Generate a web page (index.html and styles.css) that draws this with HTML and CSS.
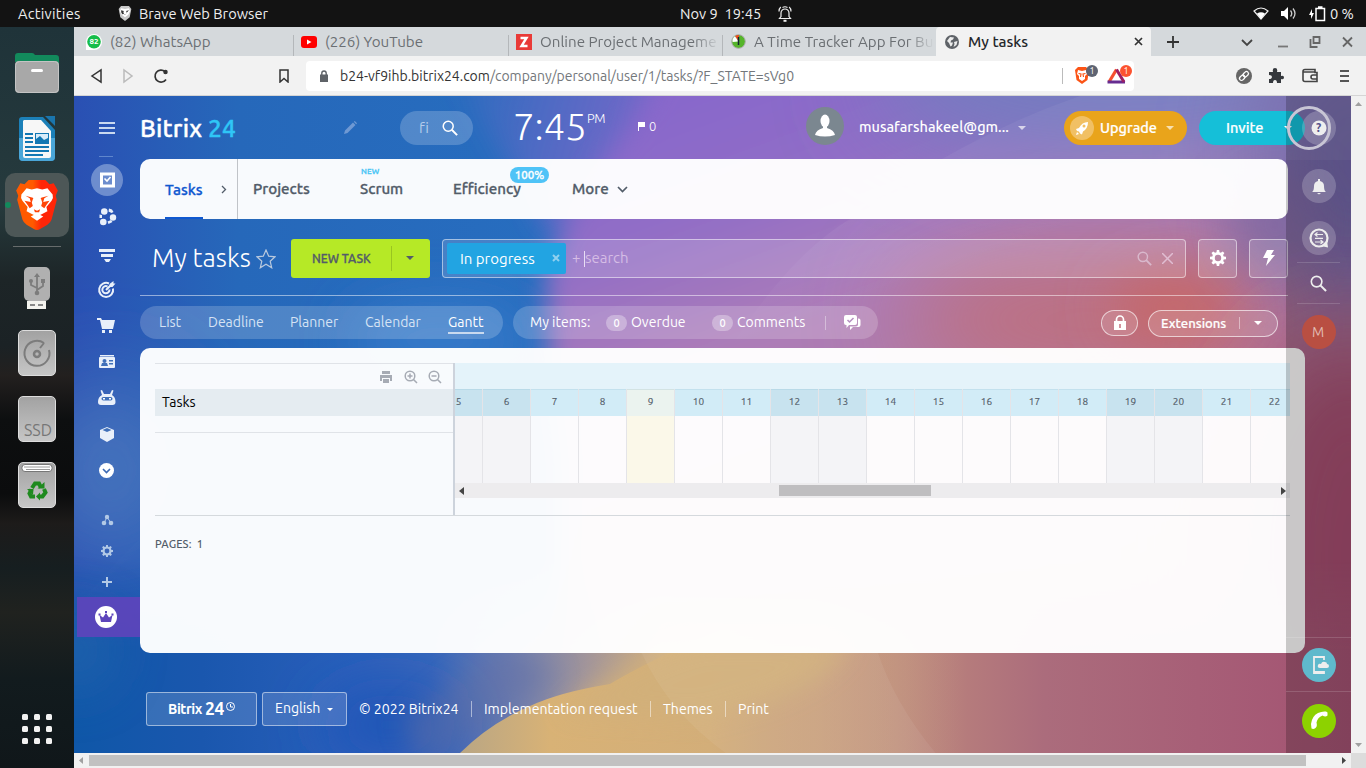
FILE: index.html
```html
<!DOCTYPE html>
<html lang="en">
<head>
<meta charset="utf-8">
<title>My tasks</title>
<link rel="stylesheet" href="styles.css">
</head>
<body>
<svg class="defs" aria-hidden="true">
  <symbol id="gear" viewBox="0 0 16 16"><path fill-rule="evenodd" fill="currentColor" d="M6.8 0h2.4l.3 2.2 1.3.6 1.9-1.4 1.7 1.7-1.3 1.9.6 1.4 2.3.3v2.5l-2.3.4-.5 1.3 1.3 1.9-1.7 1.7-1.9-1.3-1.4.5L9.200 16H6.800l-.4-2.300-1.300-.5-1.900 1.300-1.700-1.700 1.300-1.900-.5-1.300L0 9.200V6.700l2.300-.300.5-1.400-1.300-1.900 1.700-1.700 1.900 1.400 1.400-.6zM8 4.800a3.200 3.200 0 1 0 0 6.400 3.200 3.200 0 0 0 0-6.400z"/></symbol>
  <symbol id="mag" viewBox="0 0 18 18"><circle cx="7" cy="7" r="5.600" fill="none" stroke="currentColor" stroke-width="1.700"/><path d="M11 11l6 6" stroke="currentColor" stroke-width="2.200"/></symbol>
  <symbol id="caret" viewBox="0 0 8 4"><path d="M0 0h8L4 4z" fill="currentColor"/></symbol>
</svg>

<header class="sysbar">
  <span class="s-act">Activities</span>
  <svg class="s-brave" width="14" height="16" viewBox="0 0 40 48"><path fill="#c8c8c8" d="M8 3h24l7 9-5 25-14 11L6 37 1 12z"/><path fill="#fff" d="M8 10l12 2 12-2 3 9-5 10-10 8-10-8L5 19z"/><path fill="#333" d="M8 16l9 2-2 3 2 6 3 2 3-2 2-6-2-3 9-2-7 7-3 5-5-1-5 1-3-5z"/></svg>
  <span class="s-app">Brave Web Browser</span>
  <span class="s-date">Nov 9&nbsp; 19:45</span>
  <svg class="s-bell" width="14" height="16" viewBox="0 0 14 16" fill="none" stroke="#eee" stroke-width="1.200"><path d="M1.500 12.500h11L11 10.500V7a4 4 0 0 0-8 0v3.500zM2.800 1Q1 2.500 1 5.500M11.200 1Q13 2.500 13 5.500M4.500 1.500Q7 0 9.500 1.500"/><path d="M5.500 14.800h3" stroke-width="2"/></svg>
  <svg class="s-wifi" width="16" height="13" viewBox="0 0 16 13"><path d="M1 4Q8-2 15 4L8 12z" fill="none" stroke="#eee" stroke-width="1.200"/><path d="M4 6.500Q8 4 12 6.500L8 12z" fill="#fff"/></svg>
  <svg class="s-vol" width="16" height="13" viewBox="0 0 16 13"><path d="M0 4h3l4-4v13L3 9H0z" fill="#fff"/><path d="M9.500 3.500q2.500 3 0 6M12 1.500q4 5 0 10" fill="none" stroke="#ccc" stroke-width="1.300"/></svg>
  <svg class="s-bat" width="18" height="16" viewBox="0 0 18 16"><path d="M3 3L0 9h2v4l3-6H3z" fill="#fff"/><path d="M7 2.500h8.500v12H7zM9 1h4.500" fill="none" stroke="#fff" stroke-width="1.500"/></svg>
  <span class="s-pct">0 %</span>
</header>

<div class="desktop">
  <nav class="dock">
    <svg class="d-files" width="46" height="42" viewBox="0 0 46 42"><path d="M1 10V4q0-3 3-3h14q2 0 3 2h21q3 0 3 3v6z" fill="#128a5c"/><rect x="1" y="9" width="44" height="32" rx="4" fill="#a8a8a8"/><rect x="1.500" y="9.500" width="43" height="31" rx="4" fill="none" stroke="#c4c4c4"/><rect x="17" y="17" width="12" height="3" rx="1.500" fill="#fff"/></svg>
    <svg class="d-writer" width="38" height="46" viewBox="0 0 38 46"><path d="M4 1h21l12 13v27q0 4-4 4H5q-4 0-4-4V4q0-3 3-3z" fill="#1c80b8"/><path d="M27 0h10v10z" fill="#1a75ad"/><path d="M1 22h36v19q0 4-4 4H5q-4 0-4-4z" fill="#4aa6d8"/><path d="M6 4h17l10 11v25q0 2-2 2H7q-2 0-2-2V5z" fill="#f7f7f7"/><path d="M7 18h8M7 22h8M7 26h8M7 31h24M7 35h24M7 39h18" stroke="#1277b3" stroke-width="2"/><rect x="17.500" y="17.500" width="13" height="10" fill="#d8ecfa" stroke="#1277b3"/><path d="M18 27v-4l4-3 4 4 4-2v5z" fill="#1277b3"/></svg>
    <div class="d-active"><i class="d-dot"></i>
      <svg width="42" height="50" viewBox="0 0 40 48"><defs><linearGradient id="bo"><stop offset=".4" stop-color="#ff5a00"/><stop offset=".6" stop-color="#ff2508"/></linearGradient></defs><path d="M12 0h16l4 4 4-1 4 7-2 5 1 4-5 19q-1 3-4 5l-7 4q-3 2-6 0l-7-4q-3-2-4-5L1 19l1-4-2-5 4-7 4 1z" fill="url(#bo)"/><path d="M10 8l5 1 5-1 5 1 5-1 5 6q1 3-1 6l-5 6 1 4-6 3-4 2-4-2-6-3 1-4-5-6q-2-3-1-6zM14 35l6-3 6 3-6 4z" fill="#fff"/><path d="M9 15l7 2q1 .5 0 1.500l-1 3 1 3.500-3 2-2-3-3-4 6 1-1-3.500zM31 15l-7 2q-1 .5 0 1.500l1 3-1 3.500 3 2 2-3 3-4-6 1 1-3.500zM17 28l3 1.500 3-1.500-1 3h-4z" fill="#ff4508"/></svg>
    </div>
    <i class="d-sep"></i>
    <svg class="d-usb" width="28" height="44" viewBox="0 0 28 44"><rect x="1" y="1" width="26" height="34" rx="5" fill="#b0b0b0"/><path d="M4 35h19v8H4z" fill="#f3f3ee"/><path d="M7 39h5M15 39h5" stroke="#888" stroke-width="2"/><g fill="none" stroke="#7c7c7c" stroke-width="1.800"><path d="M14 9v18M14 22L8 19v-4M14 24l6-4v-5"/></g><path d="M11 11l3-4 3 4zM18 13h4v4h-4z" fill="#7c7c7c"/><circle cx="8" cy="15" r="2" fill="#7c7c7c"/><circle cx="14" cy="27" r="2.300" fill="#7c7c7c"/></svg>
    <div class="d-disk d-hdd"><svg width="30" height="30" viewBox="0 0 30 30" fill="none" stroke="#7c7c7c" stroke-width="2"><path d="M22 5A12.500 12.500 0 1 0 27 12M22 5l-4 5"/><circle cx="15" cy="16" r="3" stroke-width="2.500"/></svg></div>
    <div class="d-disk d-ssd">SSD</div>
    <div class="d-disk d-trash"><svg width="38" height="46" viewBox="0 0 38 46"><rect x="4" y="2.500" width="30" height="7" rx="3" fill="#fff" stroke="#777"/><path d="M6 5h26M8 7.500h24" stroke="#999"/><g fill="none" stroke="#1f8a1f" stroke-width="4"><path d="M14 26l3-4.500h4l2 4M26 27l1.500 3.500-3 4H21M17 34.500h-4l-1.500-3 2-4"/></g><path d="M19.500 26.500h7V20zM22 30.500v8l-4-4zM9 27h6.500L15 33z" fill="#1f8a1f"/></svg></div>
    <div class="d-apps"><i></i><i></i><i></i><i></i><i></i><i></i><i></i><i></i><i></i></div>
  </nav>

  <section class="browser">
    <div class="tabs">
      <div class="tab t1"><svg width="16" height="16" viewBox="0 0 16 16"><path d="M0 16V8a8 8 0 1 1 8 8z" fill="#fff"/><circle cx="8" cy="7.800" r="6.800" fill="#16bd4a"/></svg><b class="n82">82</b><span>(82) WhatsApp</span></div>
      <div class="tab t2"><svg width="16" height="12" viewBox="0 0 16 12"><rect width="16" height="12" rx="3" fill="#f00"/><path d="M6 3.500v5L10.500 6z" fill="#fff"/></svg><span>(226) YouTube</span></div>
      <div class="tab t3"><svg width="16" height="16" viewBox="0 0 16 16"><path fill="#e93a37" d="M0 0h16v16H0z"/><path d="M4.500 4h6l-5 8h6" fill="none" stroke="#fff" stroke-width="2.400"/></svg><span class="fade">Online Project Manageme</span></div>
      <div class="tab t4"><svg width="15" height="15" viewBox="0 0 15 15"><circle cx="7.500" cy="7.500" r="6.800" fill="#55b52a" stroke="#aaa"/><path d="M7.500 7.500L4 2.200A6 6 0 0 1 8 1z" fill="#f04a20"/><path d="M7.500 7.500L4 2.200A6 6 0 0 0 1.500 8z" fill="#fff"/><path d="M7.500 3v8" stroke="#123" stroke-width="1.500"/></svg><span class="fade">A Time Tracker App For Bu</span></div>
      <div class="tab t5"><svg width="14" height="14" viewBox="0 0 14 14"><circle cx="7" cy="7" r="7" fill="#5f6368"/><path d="M2 6l3-4 4 .5-1 2-2 1-.5 2H8l-1 3-1.500 1L4 8zM9 7l3.500-1-1 4-3 2 1-3z" fill="#eee"/></svg><span>My tasks</span><svg class="tx" width="9" height="9" viewBox="0 0 9 9"><path d="M1 1l7 7M8 1L1 8" stroke="#333" stroke-width="1.700"/></svg></div>
      <svg class="plus" width="12" height="12" viewBox="0 0 12 12"><path d="M6 0v12M0 6h12" stroke="#333" stroke-width="1.800"/></svg>
      <svg class="win" width="114" height="12" viewBox="0 0 114 12" fill="none" stroke="#444" stroke-width="1.800"><path d="M1 4l5 5 5-5"/><path d="M37 10.500h10" stroke="#777"/><path d="M72.500 1h6v6h-6zM69.500 3v8h7" stroke="#666"/><path d="M102 1.500l9 9M111 1.500l-9 9" stroke="#666"/></svg>
    </div>
    <div class="toolbar">
      <svg class="nav3" width="80" height="16" viewBox="0 0 80 16" fill="none" stroke="#333" stroke-width="1.500"><path d="M12 2v12L3 8z"/><path d="M35 2v12l8-6z" stroke="#bbb"/><path d="M77 11.500A6 6 0 1 1 76 3.500" stroke-width="1.700"/><circle cx="76.500" cy="4" r="1.500" fill="#333"/></svg>
      <svg class="bm" width="10" height="14" viewBox="0 0 10 14"><path d="M1 1h8v12L5 9.500 1 13z" fill="none" stroke="#333" stroke-width="1.500"/></svg>
      <div class="url">
        <svg class="lk" width="8" height="12" viewBox="0 0 8 12"><path d="M0 4.500h8V12H0z" fill="#5f6368"/><path d="M1.800 5V3.200a2.200 2.200 0 0 1 4.400 0V5" fill="none" stroke="#5f6368" stroke-width="1.400"/></svg>
        <span class="addr"><em>b24-vf9ihb.bitrix24.com</em>/company/personal/user/1/tasks/?F_STATE=sVg0</span>
        <i class="usep"></i>
        <svg class="ext" width="60" height="22" viewBox="0 0 60 22"><path d="M4 3h8l3 3-1.500 10L8 20l-5.500-4L1 6z" fill="#fb5416"/><path d="M4 6l4 1 4-1 1 4-2 2v3l-3 2-3-2v-3l-2-2z" fill="#fff"/><path d="M4.500 9.500L7 10l-.5 3M11.500 9.500L9 10l.5 3" fill="none" stroke="#fb5416" stroke-width="1.200"/><circle cx="18" cy="7" r="6" fill="#5e6472"/><path d="M42.500 5L34 19h17z" fill="#fff"/><path d="M35 18L42.500 5.500" stroke="#f5502f" stroke-width="3.200"/><path d="M33.500 18h17.500" stroke="#662d91" stroke-width="3"/><path d="M42.500 5.500L50 18" stroke="#9e1f63" stroke-width="3"/><circle cx="52" cy="7" r="6" fill="#fc5330"/><g fill="#fff" font-size="9" text-anchor="middle"><text x="18" y="10.200">1</text><text x="52" y="10.200">1</text></g></svg>
      </div>
      <svg class="tools" width="116" height="18" viewBox="0 0 116 18"><circle cx="8" cy="9" r="8" fill="#666"/><g fill="none" stroke="#fff" stroke-width="1.300" transform="rotate(-45 8 9)"><rect x="2.500" y="7" width="6" height="4" rx="2"/><rect x="7.500" y="7" width="6" height="4" rx="2"/></g><path d="M33 5h4q-1-4 2-4t2 4h4v4q3-1 3 1.500T45 12v4h-4q0-3-2-3t-2 3h-4v-4q3 0 3-2t-3-2z" fill="#35383d"/><path d="M67 4.500q0-2 2-2h10v3h2v9H69q-2 0-2-2zM67 5h12M81 8h-4q-2 0-2 2t2 2h4" fill="none" stroke="#444" stroke-width="1.600"/><path d="M104 4h9M104 9h9M104 14h9" stroke="#555" stroke-width="2"/></svg>
    </div>

    <div class="view">
      <main class="page">
        <svg class="bg" width="1277" height="657" viewBox="74 96 1277 657" preserveAspectRatio="none">
          <defs>
            <linearGradient id="base" x1="74" x2="540" y1="0" y2="0" gradientUnits="userSpaceOnUse"><stop offset="0" stop-color="#2a50b3"/><stop offset=".35" stop-color="#2668ba"/><stop offset="1" stop-color="#276dbf"/></linearGradient>
            <linearGradient id="right" x1="700" x2="900" y1="96" y2="640" gradientUnits="userSpaceOnUse"><stop offset="0" stop-color="#8868cb"/><stop offset=".2" stop-color="#926ec6"/><stop offset=".42" stop-color="#ac7cb8"/><stop offset="1" stop-color="#b6788e"/></linearGradient>
            <linearGradient id="top" x1="440" x2="660" y1="90" y2="150" gradientUnits="userSpaceOnUse"><stop offset="0" stop-color="#8467ca" stop-opacity="0"/><stop offset="1" stop-color="#8467ca" stop-opacity=".9"/></linearGradient>
            <linearGradient id="strip" x1="74" x2="1351" y1="0" y2="0" gradientUnits="userSpaceOnUse"><stop offset="0" stop-color="#0f57a8"/><stop offset=".1" stop-color="#1a57ae"/><stop offset=".22" stop-color="#2a5fbb"/><stop offset=".28" stop-color="#3866bb"/><stop offset=".34" stop-color="#6b7cb0"/><stop offset=".4" stop-color="#a0949b"/><stop offset=".46" stop-color="#cfae80"/><stop offset=".58" stop-color="#ceaa7d"/><stop offset=".65" stop-color="#c2937f"/><stop offset=".7" stop-color="#b57b7c"/><stop offset=".76" stop-color="#ab6c7c"/><stop offset="1" stop-color="#a35272"/></linearGradient>
            <linearGradient id="stripfade" x1="0" x2="0" y1="560" y2="650" gradientUnits="userSpaceOnUse"><stop offset="0" stop-color="#000"/><stop offset="1" stop-color="#fff"/></linearGradient>
            <mask id="sm"><path d="M74 560h1277v193H74z" fill="url(#stripfade)"/></mask>
            <filter id="b12" x="-30%" y="-30%" width="160%" height="160%"><feGaussianBlur stdDeviation="13"/></filter>
            <filter id="b24" x="-100%" y="-100%" width="300%" height="300%"><feGaussianBlur stdDeviation="26"/></filter>
            <filter id="b45" x="-100%" y="-100%" width="300%" height="300%"><feGaussianBlur stdDeviation="46"/></filter>
            <linearGradient id="sand" x1="460" x2="960" y1="0" y2="0" gradientUnits="userSpaceOnUse"><stop offset="0" stop-color="#b9a684"/><stop offset=".18" stop-color="#d8b276"/><stop offset=".5" stop-color="#d3ae79"/><stop offset=".7" stop-color="#c79d80" stop-opacity=".6"/><stop offset="1" stop-color="#b98886" stop-opacity="0"/></linearGradient>
            <linearGradient id="arc" x1="0" x2=".5" y1="0" y2=".4"><stop offset="0" stop-color="#fff" stop-opacity=".09"/><stop offset="1" stop-color="#fff" stop-opacity="0"/></linearGradient>
            <linearGradient id="edge" x1="860" x2="905" y1="0" y2="-20" gradientUnits="userSpaceOnUse"><stop offset="0" stop-color="#b89098" stop-opacity="0"/><stop offset="1" stop-color="#b89098" stop-opacity=".5"/></linearGradient>
          </defs>
          <path fill="url(#base)" d="M74 96h1277v657H74z"/>
          <ellipse filter="url(#b24)" cx="440" cy="340" rx="90" ry="40" fill="#3679c9"/>
          <path fill="url(#top)" filter="url(#b12)" d="M440 60H800V230H545L520 180z"/>
          <path filter="url(#b12)" fill="url(#right)" d="M665 60Q640 120 590 180 548 240 546 290 545 350 560 460V800H1450V20z"/>
          <ellipse filter="url(#b45)" cx="1130" cy="75" rx="260" ry="85" fill="#757bc0"/>
          <ellipse filter="url(#b45)" cx="1350" cy="160" rx="100" ry="150" fill="#7166a8"/>
          <ellipse filter="url(#b45)" cx="1090" cy="320" rx="190" ry="65" fill="#bd707f"/>
          <ellipse filter="url(#b24)" cx="1175" cy="308" rx="65" ry="38" fill="#c5686b"/>
          <ellipse filter="url(#b24)" cx="1275" cy="225" rx="45" ry="50" fill="#80679f" opacity=".7"/>
          <ellipse filter="url(#b45)" cx="1350" cy="560" rx="120" ry="230" fill="#a44e70"/>
          <ellipse filter="url(#b45)" cx="110" cy="470" rx="70" ry="90" fill="#4a76bd"/>
          <path mask="url(#sm)" fill="url(#strip)" d="M74 560h1277v193H74z"/>
          <ellipse filter="url(#b24)" cx="75" cy="650" rx="40" ry="40" fill="#2c67ae" opacity=".6"/>
          <ellipse filter="url(#b24)" cx="390" cy="725" rx="70" ry="40" fill="#2356b8"/>
          <path filter="url(#b12)" fill="#626fa6" opacity=".5" d="M425 770L560 672 500 650 400 720z"/>
          <path fill="url(#sand)" d="M460 753Q490 723 530 706 560 692 610 684 650 660 720 630H960V753z"/>
          <path filter="url(#b12)" fill="#d2b07a" d="M560 712Q620 665 700 640H850Q830 690 700 720z" opacity=".9"/>
          <path fill="url(#arc)" d="M74 612Q115 560 150 530 200 490 260 470V612z"/>
          <path fill="#fff" opacity=".05" d="M940 160Q1010 120 1080 96H1351V160z"/>
          <path fill="url(#arc)" d="M730 348Q790 255 850 219L900 190H1288V348z"/>
          <path fill="#fff" opacity=".06" d="M640 650Q670 715 730 756H938Q895 705 877 650z"/>
          <path fill="url(#edge)" d="M877 650Q895 705 938 756H870L840 650z"/>
        </svg>

        <aside class="menu">
          <svg width="66" height="560" viewBox="74 96 66 560">
            <g fill="none" stroke="#c9d9f0" stroke-width="2"><path d="M99 123h16M99 128h16M99 133h16"/><path d="M99 156.500h14" stroke="#5f86cd" stroke-width="1"/></g>
            <circle cx="107" cy="180" r="16" fill="#6d8dce"/>
            <path d="M101.500 174h12v12h-12z" fill="none" stroke="#fff" stroke-width="3"/><path d="M103 176h9v4.500q-2 .5-2 3h-5q0-2.500-2-3z" fill="#6d8dce"/><path d="M104.500 178.500l2.500 2.500 3.500-4" fill="none" stroke="#fff" stroke-width="1.600"/>
            <g fill="#e9f0fa"><circle cx="104.300" cy="211.500" r="3.300"/><circle cx="103.300" cy="222" r="3.300"/><circle cx="113" cy="217.500" r="3.200"/><path d="M109 208.500l3 1 1.500 2.500-2 1-3-1.500zM99.500 214.500l2.500.5v3h-2.500zM107.500 221.500l3.500-1.500 1.500 2-4 2z"/>
            <path d="M99 249h16v3H99zM101 254h12v3h-12zM104 259h7l-2 3h-3z"/></g>
            <g fill="none" stroke="#e9f0fa" stroke-width="2"><path d="M109 283.500a7 7 0 1 0 4 5"/><path d="M107.500 286.500a3.600 3.600 0 1 0 2 3M106 290l6-6"/></g><path d="M109.500 284l4-3v2.500h2l-3 3.500h-2.500z" fill="#e9f0fa"/>
            <g fill="#e9f0fa"><path d="M97 318h4l1 2h13l-2 9h-11l-2-9h-3zM102 330h3v3h-3zM109 330h3v3h-3z"/>
            <path d="M100 355h14v1.500h-14z"/><rect x="99" y="357" width="16" height="11" rx="1"/>
            <path d="M98 402q0-5 4-7l-1.500-4.500 1.500-.5 2 4h6l2-4 1.500.5L112 395q3.500 2 3.500 7 0 3-3 3h-11.500q-3 0-3-3z"/><path d="M100 430l7-3 7 3v8l-7 4-7-4z"/></g><path d="M102.500 430l4.500-2 4.500 2-4.500 2z" fill="#4070b9"/>
            <path d="M101 366l1-3h5l1 3zM109 360h4v1.500h-4zM109 363h4v1.500h-4z" fill="#4070b9"/><circle cx="104.500" cy="361" r="2" fill="#4070b9"/><rect x="101.500" y="397" width="11" height="3.600" rx="1.800" fill="#4070b9"/><path d="M103 398.700h2M109 398.700h2" stroke="#fff" stroke-width="1.500"/>
            <circle cx="106.500" cy="470.500" r="7.500" fill="#fff"/><path d="M103 469l3.500 3.500 3.500-3.500" fill="none" stroke="#3c69b3" stroke-width="1.600"/>
            <g fill="#b2c9e6"><circle cx="107" cy="517" r="2.200"/><circle cx="104" cy="523" r="2.300"/><circle cx="111" cy="523" r="2.300"/></g><path d="M104 523l3-6 4 6" fill="none" stroke="#b2c9e6"/>
            <svg x="101" y="545" width="12" height="12" color="#b2c9e6"><use href="#gear"/></svg><path d="M107 577v10M102 582h10" stroke="#b2c9e6" stroke-width="2"/>
            <path d="M77 597h63v40H77z" fill="#5d45bb" opacity=".93"/><circle cx="106" cy="617" r="11" fill="#fff"/><path d="M101 622l-1.500-7 3.500 2.500 3-4.500 3 4.500 3.500-2.500-1.500 7zM98.500 613.500h2v2h-2zM105 611h2v2h-2zM111.500 613.500h2v2h-2z" fill="#5d45bb"/>
          </svg>
        </aside>

        <div class="content">
          <div class="head">
            <span class="logo">Bitrix <b>24</b></span>
            <svg class="pencil" width="13" height="13" viewBox="0 0 13 13"><path d="M0 13l1-3.500L9 1.500l2.500 2.500-8 8zM9.800.8l1-.8L13 2.200l-.8 1z" fill="#6f99d3"/></svg>
            <div class="find"><span>fi</span><svg width="16" height="16"><use href="#mag"/></svg></div>
            <span class="clock">7:45</span><span class="pm">PM</span>
            <svg class="flag" width="7" height="9" viewBox="0 0 7 9"><path d="M0 0h7v5H1v4H0z" fill="#fff"/></svg><span class="cnt">0</span>
            <svg class="ava" width="38" height="38" viewBox="0 0 38 38"><circle cx="19" cy="19" r="19" fill="#7b8790"/><ellipse cx="19" cy="14" rx="4.500" ry="6.500" fill="#fff"/><path d="M17 18h4v3q7 2 8 7-10 3-20 0 1-5 8-7z" fill="#fff"/></svg>
            <span class="mail">musafarshakeel@gm...</span><svg class="c1" width="8" height="4"><use href="#caret"/></svg>
            <div class="btn up"><svg width="24" height="24" viewBox="0 0 24 24"><circle cx="12" cy="12" r="12" fill="#f1c064"/><path d="M18 6q-6 0-9 6l-3 1 1 2 2 .5 1 2 2 1 1-3q5-3 5-9.500zM7 16l-1 3 3-1z" fill="#fff"/><circle cx="14" cy="10" r="1.500" fill="#f1c064"/></svg><span>Upgrade</span><svg width="8" height="4"><use href="#caret"/></svg></div>
            <div class="btn inv"><span>Invite</span><svg width="8" height="4"><use href="#caret"/></svg></div>
          </div>
          <nav class="nav">
            <span class="n-tasks">Tasks</span><svg class="n-ar" width="6" height="9" viewBox="0 0 6 9"><path d="M1 1l3.500 3.500L1 8" fill="none" stroke="#525c69" stroke-width="1.300"/></svg><i class="n-div"></i>
            <span class="n-proj">Projects</span><span class="n-scrum">Scrum<sup>NEW</sup></span><span class="n-eff">Efficiency<b>100%</b></span><span class="n-more">More</span>
            <svg width="11" height="7" viewBox="0 0 11 7"><path d="M1 1l4.500 4.500L10 1" fill="none" stroke="#525c69" stroke-width="1.700"/></svg>
          </nav>
          <div class="titlebar">
            <h1>My tasks</h1>
            <svg class="star" width="20" height="20" viewBox="0 0 20 20"><path d="M10 1l2.700 6.200 6.300.6-4.800 4.400 1.500 6.600L10 15.200l-5.700 3.600 1.500-6.600L1 7.800l6.300-.6z" fill="none" stroke="#b9c9de" stroke-width="1.200"/></svg>
            <div class="newtask"><span>NEW TASK</span><svg width="8" height="4"><use href="#caret"/></svg></div>
            <div class="filter"><div class="chip"><span>In progress</span><svg width="8" height="8" viewBox="0 0 8 8"><path d="M1 1l6 6M7 1L1 7" stroke="#8fd0ef" stroke-width="2"/></svg></div><span class="ph">+ <i></i>search</span><svg class="fm" width="15" height="15"><use href="#mag"/></svg><svg width="11" height="11" viewBox="0 0 11 11"><path d="M0 0l11 11M11 0L0 11" stroke="#e0bdd2" stroke-width="1.500"/></svg></div>
            <div class="sq"><svg width="16" height="16"><use href="#gear"/></svg></div>
            <div class="sq sq2"><svg width="12" height="16" viewBox="0 0 12 16"><path d="M4 0h7L8 5h4L3 16l2-8H0z" fill="#fff"/></svg></div>
          </div>
          <div class="views">
            <div class="pill p1"><span class="v1">List</span><span class="v2">Deadline</span><span class="v3">Planner</span><span class="v4">Calendar</span><span class="v5">Gantt</span></div>
            <div class="pill p2"><span class="w1">My items:</span><b>0</b><span class="w2">Overdue</span><b>0</b><span class="w3">Comments</span><i></i><svg width="17" height="16" viewBox="0 0 17 16"><path d="M2 0h9q2 0 2 2v6q0 2-2 2H5l-2.500 3v-3H2Q0 10 0 8V2q0-2 2-2z" fill="#fff"/><path d="M14 3.500q2.500-.5 2.500 2v4.500q0 2-2 2H9l-3 3v-3.500h6q2 0 2-2z" fill="#fff"/><path d="M3.500 5l2 2 4-4" fill="none" stroke="#b58ec0" stroke-width="1.500"/></svg></div>
            <div class="lock"><svg width="12" height="15" viewBox="0 0 12 15"><path fill="#fff" d="M0 6h12v9H0z"/><path d="M2.500 7V4.500a3.500 3.500 0 0 1 7 0V7" fill="none" stroke="#fff" stroke-width="1.700"/><path d="M6 9v4" stroke="#c4707c" stroke-width="1.500"/></svg></div>
            <div class="exts"><span>Extensions</span><i></i><svg width="8" height="4"><use href="#caret"/></svg></div>
          </div>

          <div class="panel">
            <div class="gantt">
              <div class="g-left">
                <div class="g-tools"><svg width="62" height="14" viewBox="0 0 62 14"><path d="M2 1h8v3H2zM0 5h12v6h-2V8H2v3H0zM3 9h6v4H3z" fill="#a6abb4"/><g fill="none" stroke="#a6abb4" stroke-width="1.500"><circle cx="30" cy="6" r="4.800"/><circle cx="54" cy="6" r="4.800"/><path d="M33.500 9.500l3.500 3.500M57.500 9.500l3.500 3.500M27.500 6h5M30 3.500v5M51.500 6h5"/></g></svg></div>
                <div class="g-title">Tasks</div><div class="g-row"></div>
              </div>
              <div class="g-right">
                <div class="g-month"></div>
                <div class="days"><div class="we">5</div><div class="we">6</div><div>7</div><div>8</div><div class="now">9</div><div>10</div><div>11</div><div class="we">12</div><div class="we">13</div><div>14</div><div>15</div><div>16</div><div>17</div><div>18</div><div class="we">19</div><div class="we">20</div><div>21</div><div>22</div></div>
                <div class="g-scroll"><svg width="5" height="8" viewBox="0 0 5 8"><path d="M5 0v8L0 4z" fill="#444"/></svg><i></i><svg width="5" height="8" viewBox="0 0 5 8"><path d="M0 0v8l5-4z" fill="#444"/></svg></div>
              </div>
            </div>
            <div class="pages">PAGES:&nbsp; 1</div>
          </div>

          <footer class="foot">
            <div class="fb f1"><b>Bitrix</b><b class="f24">24</b><svg width="9" height="9" viewBox="0 0 9 9" fill="none" stroke="#fff"><circle cx="4.500" cy="4.500" r="4"/><path d="M4.500 2v3H7"/></svg></div>
            <div class="fb f2"><span>English</span><svg width="6" height="3"><use href="#caret"/></svg></div>
            <span class="ft a">© 2022 Bitrix24</span><i></i><span class="ft b">Implementation request</span><i></i><span class="ft c">Themes</span><i></i><span class="ft d">Print</span>
          </footer>
        </div>

        <aside class="rail">
          <svg width="65" height="657" viewBox="1286 96 65 657">
            <g fill="#fff" fill-opacity=".2"><circle cx="1319" cy="128" r="17"/><circle cx="1319" cy="186" r="17"/><circle cx="1319" cy="238" r="17"/></g>
            <circle cx="1309" cy="128" r="20.500" fill="none" stroke="#c8c5d5" stroke-width="3"/><circle cx="1319" cy="128" r="7.500" fill="#eee"/>
            <path d="M1312 192q2-1 2-6 0-4 4-5v-2h2v2q4 1 4 5 0 5 2 6zM1317 193h4l-2 1.500z" fill="#eee"/>
            <circle cx="1319" cy="238" r="8.500" fill="none" stroke="#eee" stroke-width="2.200"/><path d="M1321 246l7 1.500-1-7z" fill="#eee"/><path d="M1315 234.500h8M1315 238.300h8M1315 242h8M1317.500 232.500l-2.500 2 2.500 2M1320.500 240l2.500 2-2.500 2" fill="none" stroke="#eee" stroke-width="1.200"/>
            <path d="M1297 262.500h43M1297 303.500h43M1286 637.500h65M1286 691.500h65" stroke="#fff" stroke-opacity=".15"/>
            <svg x="1310" y="275" width="17" height="17" color="#eee"><use href="#mag"/></svg>
            <circle cx="1319" cy="332" r="17" fill="#b94f42"/><circle cx="1319" cy="665" r="17" fill="#5fb9cc"/><circle cx="1319" cy="721" r="17" fill="#8dd200"/>
            <path d="M1324 660v-3h-10v16h10v-2" fill="none" stroke="#eee" stroke-width="1.800"/><path d="M1314 671h10v2h-10z" fill="#eee"/><path d="M1320 668q-3 0-2-3 1-2 3-1 1-3 4-2 2 0 2 2 2 0 2 2t-2 2z" fill="#eee"/>
            <path d="M1311 724q1-8 7-11 4-2 8-1.500l1.500 1v3q-2 2-5 0-5 2-6 7 1 4-1 5.500-2 1.500-4 .5z" fill="#fff"/>
          </svg>
          <span class="q">?</span><span class="m">M</span>
        </aside>
      </main>
      <div class="vs"><svg width="7" height="4" viewBox="0 0 7 4"><path d="M0 4h7L3.500 0z" fill="#a0a0a0"/></svg><svg width="7" height="4" viewBox="0 0 7 4"><path d="M0 0h7L3.500 4z" fill="#a0a0a0"/></svg></div>
    </div>
    <div class="hs"><svg width="4" height="7" viewBox="0 0 4 7"><path d="M4 0v7L0 3.500z" fill="#a0a0a0"/></svg><i></i><svg width="4" height="7" viewBox="0 0 4 7"><path d="M0 0v7l4-3.500z" fill="#444"/></svg><b></b></div>
  </section>
</div>
</body>
</html>
```

FILE: styles.css
```css
* { box-sizing: border-box; }
body { margin: 0; width: 1366px; height: 768px; overflow: hidden; font-family: Ubuntu, "Noto Sans", sans-serif; font-size: 14px; color: #fff; white-space: nowrap; }
svg { display: block; flex: none; }
.defs { position: absolute; width: 0; height: 0; }
i, em { font-style: normal; }

/* system bar */
.sysbar { height: 27px; background: #131313; display: flex; align-items: center; color: #eee; font-size: 14.670px; line-height: 28px; }
.sysbar > * { flex: none; }
.s-act { margin-left: 18px; width: 100px; letter-spacing: .25px; }
.s-brave { margin-top: -2px; }
.s-app { margin-left: 7px; width: 541px; }
.s-date { width: 98px; line-height: 26px; }
.s-wifi { margin-left: 461px; }
.s-vol { margin-left: 12px; }
.s-bat { margin-left: 12px; }
.s-pct { margin-left: 3px; }

.desktop { display: flex; height: 741px; }
.dock { width: 74px; flex: none; display: flex; flex-direction: column; align-items: center; background: linear-gradient(#1f3339 0, #263a3d 24%, #1d2527 34%, #1b2225 43%, #23201f 47%, #0d0f10 53%, #0b0c0d 63%, #1d1b1a 67%, #161e20 73%, #20221f 79%, #121b1e 88%, #10171a 100%); }
.d-files { margin-top: 25px; }
.d-writer { margin-top: 22px; }
.d-active { margin-top: 11px; width: 64px; height: 64px; border-radius: 10px; background: #4d5757; display: flex; align-items: center; justify-content: center; position: relative; }
.d-dot { position: absolute; left: 0; top: 29px; width: 6px; height: 6px; border-radius: 3px; background: #128a5c; }
.d-sep { width: 48px; height: 1px; background: #676c6c; margin-top: 9px; }
.d-usb { margin-top: 19px; }
.d-disk { width: 38px; height: 46px; margin-top: 20px; margin-right: 1px; border-radius: 5px; border: 1px solid #ddd; background: linear-gradient(#a2a2a2, #c6c6c6); display: flex; align-items: center; justify-content: center; flex: none; color: #767676; }
.d-hdd { margin-top: 20px; }
.d-ssd { font-size: 16px; align-items: flex-end; line-height: 21px; padding-left: 3px; }
.d-apps { margin-top: 206px; display: grid; grid-template-columns: repeat(3, 6px); gap: 6px; }
.d-apps i { height: 6px; border-radius: 1.500px; background: #f2f2f2; }

/* browser chrome */
.browser { width: 1292px; flex: none; }
.tabs { height: 29px; background: #d5d9dc; display: flex; align-items: center; color: #6b6f73; font-size: 15.150px; }
.tab { display: flex; align-items: center; height: 29px; flex: none; position: relative; }
.tab::after { content: ""; position: absolute; right: 0; top: 8px; height: 21px; width: 1px; background: #b4b7ba; }
.t1 { width: 220px; padding-left: 12px; }
.t1 span { margin-left: 8px; }
.n82 { position: absolute; left: 12px; width: 16px; text-align: center; font-size: 8px; color: #fff; }
.t2 { width: 215px; padding-left: 7px; }
.t2 span { margin-left: 8px; }
.t3 { width: 214px; padding-left: 7px; }
.t3 span { margin-left: 8px; width: 182px; }
.t4 { width: 213px; padding-left: 8px; }
.t4 span { margin-left: 8px; width: 182px; }
.t4::after, .t5::after { display: none; }
.fade { overflow: hidden; -webkit-mask: linear-gradient(90deg, #000 84%, transparent 99%); mask: linear-gradient(90deg, #000 84%, transparent 99%); }
.t5 { width: 215px; background: #f2f2f2; border-radius: 4px 4px 0 0; padding-left: 9px; color: #24272a; font-weight: 500; }
.t5 span { margin-left: 9px; }
.tx { position: absolute; left: 198px; }
.plus { margin-left: 16px; }
.win { margin-left: 62px; }
.toolbar { height: 40px; background: #f2f2f2; border-bottom: 1px solid #d5d5d5; display: flex; align-items: center; }
.nav3 { margin-left: 15px; }
.bm { margin-left: 110px; }
.url { margin-left: 17px; width: 828px; height: 30px; background: #fff; border-radius: 4px; display: flex; align-items: center; color: #73777b; flex: none; }
.lk { margin-left: 14px; }
.addr { margin-left: 12px; width: 722px; font-size: 14px; }
.addr em { color: #333; }
.usep { width: 1px; height: 16px; background: #bbb; margin-right: 11px; }
.ext { margin-top: -2px; }
.tools { margin-left: 102px; }

/* viewport */
.view { display: flex; height: 657px; }
.page { width: 1277px; height: 657px; position: relative; display: flex; overflow: hidden; }
.bg { position: absolute; left: 0; top: 0; }
.menu { width: 66px; flex: none; position: relative; }
.content { position: relative; width: 1165px; flex: none; }
.vs { width: 15px; background: #f1f1f1; display: flex; flex-direction: column; align-items: center; justify-content: space-between; padding: 6px 0 6px; }
.hs { height: 15px; background: #f1f1f1; display: flex; align-items: center; }
.hs svg:first-child { margin-left: 5px; }
.hs i { margin-left: 6px; width: 1217px; height: 11px; background: #c1c1c1; }
.hs b { margin-left: 5px; width: 15px; height: 15px; background: #dcdcdc; }
.hs i + svg { margin-left: 36px; }

.head { height: 63px; display: flex; align-items: center; }
.head > * { flex: none; }
.logo { width: 204px; font-size: 24.500px; letter-spacing: .2px; font-weight: 500; -webkit-text-stroke: .4px; }
.logo b { color: #2fc6f6; font-weight: 500; }
.find { margin-left: 43px; width: 73px; height: 34px; border-radius: 17px; background: #ffffff33; display: flex; align-items: center; padding-left: 19px; }
.find span { width: 23px; color: #b5cdea; font-size: 15px; font-variant-ligatures: none; }
.clock { margin-left: 40px; width: 74px; font-size: 38.500px; font-weight: 300; letter-spacing: -.2px; line-height: 59px; height: 63px; }
.pm { width: 51px; font-size: 13px; font-weight: 300; margin-top: -19px; letter-spacing: -.5px; }
.flag { margin-top: -3px; }
.cnt { margin-left: 4px; width: 157px; font-size: 13px; font-weight: 300; margin-top: -4px; }
.ava { margin-top: -4px; }
.mail { margin-left: 15px; width: 159px; font-size: 14.500px; font-weight: 500; margin-top: -2px; }
.c1 { color: #d8d4ea; }
.btn { height: 34px; border-radius: 17px; display: flex; align-items: center; font-size: 14.500px; font-weight: 500; -webkit-text-stroke: .2px; }
.up { margin-left: 38px; width: 123px; background: #e9a41b; padding-left: 6px; }
.up span { width: 66px; margin-left: 6px; }
.up svg:last-child { color: #f8e0b0; }
.inv { margin-left: 12px; width: 106px; background: #15bfd8; padding-left: 27px; }
.inv span { width: 58px; }

.nav { width: 1148px; height: 60px; border-radius: 10px; background: #fffffff7; color: #525c69; display: flex; align-items: center; font-weight: 500; font-size: 15.150px; padding-left: 25px; -webkit-text-stroke: .3px; }
.nav > * { flex: none; }
.n-tasks { width: 38px; height: 60px; line-height: 61px; color: #1058d0; border-bottom: 2px solid #1058d0; }
.n-ar { margin-left: 18px; }
.n-div { margin-left: 10px; width: 1px; height: 60px; background: #c0c3c8; }
.n-proj, .n-scrum, .n-eff, .n-more { line-height: 18px; }
.n-proj { margin-left: 15px; width: 107px; }
.n-scrum { width: 93px; position: relative; }
.n-scrum sup { position: absolute; left: 1px; top: -14px; font-size: 8px; line-height: 12px; color: #47c5f5; letter-spacing: .2px; }
.n-eff { width: 119px; position: relative; }
.n-eff b { position: absolute; left: 57px; top: -13px; width: 39px; height: 16px; border-radius: 8px; background: #4fc3f7; color: #fff; font-size: 11.500px; line-height: 16px; text-align: center; font-weight: 500; }
.n-more { width: 45px; }

.titlebar { width: 1148px; height: 77px; border-bottom: 1px solid #ffffff80; display: flex; align-items: center; padding-top: 2px; }
.titlebar > * { flex: none; }
h1 { margin: 0 0 0 12px; width: 104px; font-size: 26px; line-height: 36px; font-weight: 300; }
.star { margin-top: 2px; }
.newtask { margin-left: 15px; width: 139px; height: 39px; border-radius: 3px; background: #b6e926; color: #535c69; display: flex; align-items: center; padding-left: 21px; font-size: 12.100px; font-weight: 500; -webkit-text-stroke: .3px; }
.newtask span { width: 80px; height: 25px; line-height: 25px; border-right: 1px solid #99c520; margin-right: 14px; }
.filter { margin-left: 12px; width: 744px; height: 39px; border: 1px solid #ffffff80; border-radius: 4px; background: #ffffff26; display: flex; align-items: center; padding-left: 4px; }
.chip { width: 119px; height: 31px; background: #22a4e2; border-radius: 2px; display: flex; align-items: center; padding-left: 13px; font-size: 15px; }
.chip span { width: 92px; }
.ph { margin-left: 6px; width: 565px; color: #d5bce5; font-size: 15px; }
.ph i { display: inline-block; width: 1px; height: 16px; background: #e9ddf4; vertical-align: middle; }
.fm { color: #d9b8cc; margin-right: 10px; }
.sq { margin-left: 12px; width: 39px; height: 39px; border: 1px solid #ffffff80; border-radius: 4px; background: #ffffff26; display: flex; align-items: center; justify-content: center; }

.views { height: 52px; display: flex; align-items: center; }
.views > *, .pill > * { flex: none; }
.pill { height: 33px; border-radius: 17px; background: #ffffff30; display: flex; align-items: center; font-size: 14px; margin-top: 1px; line-height: 20px; }
.pill span { margin-top: -1px; }
.p1 { width: 363px; padding-left: 19px; color: #d6e3f4; }
.v1 { width: 49px; } .v2 { width: 82px; } .v3 { width: 75px; } .v4 { width: 83px; }
.pill .v5 { color: #fff; border-bottom: 2px solid #c9daef; width: 36px; line-height: 20px; margin-top: 1px; }
.p2 { margin-left: 10px; width: 365px; padding-left: 17px; }
.w1 { width: 76px; }
.pill b { width: 21px; height: 16px; line-height: 16px; border-radius: 8px; background: #ffffff50; font-size: 11px; font-weight: 500; text-align: center; }
.w2 { margin-left: 4px; width: 81px; } .w3 { margin-left: 4px; width: 88px; }
.pill i { width: 1px; height: 14px; background: #ffffff60; margin-right: 18px; }
.lock { margin-left: 223px; width: 37px; height: 26px; border: 1px solid #ffffffa0; border-radius: 13px; background: #ffffff25; display: flex; align-items: center; justify-content: center; margin-top: 1px; }
.exts { margin-left: 10px; width: 130px; height: 27px; border: 1px solid #ffffffa0; border-radius: 14px; background: #ffffff25; display: flex; align-items: center; padding-left: 12px; font-size: 13.100px; font-weight: 500; margin-top: 2px; -webkit-text-stroke: .2px; }
.exts span { width: 78px; }
.exts i { width: 1px; height: 12px; background: #ffffff70; margin-right: 14px; }

/* Gantt panel */
.panel { width: 1165px; height: 305px; border-radius: 10px; background: #fffffff7; padding: 15px; color: #525c69; }
.gantt { height: 153px; display: flex; border-bottom: 1px solid #d5d9dd; }
.g-left { width: 298px; flex: none; border-top: 1px solid #e0e3e8; }
.g-tools { height: 25px; padding: 6px 0 0 225px; }
.g-title { height: 27px; line-height: 26px; background: #e5ecf1; color: #000; padding-left: 7px; font-size: 14px; }
.g-row { height: 17px; border-bottom: 1px solid #e0e3e8; }
.g-right { width: 837px; flex: none; border-left: 2px solid #cdd3dc; overflow: hidden; }
.g-month { height: 26px; background: #e4f3fa; }
.days { display: flex; height: 94px; margin-left: -20px; }
.days div { width: 48px; flex: none; border-right: 1px solid #e4e4e8; font-size: 10px; line-height: 25px; text-align: center; -webkit-text-stroke: .15px; background: linear-gradient(#c3e1ee 0, #c3e1ee 1px, #d2ecf7 1px, #d2ecf7 27px, transparent 27px); }
.days .we { background: linear-gradient(#b9dae8 0, #b9dae8 1px, #c8e3ef 1px, #c8e3ef 27px, #f4f4f7 27px); }
.days .now { background: linear-gradient(#d3e3e3 0, #d3e3e3 1px, #ebf3ef 1px, #ebf3ef 27px, #fbf8e9 27px); }
.g-scroll { height: 15px; background: #edecee; display: flex; align-items: center; padding-left: 4px; }
.g-scroll i { width: 152px; height: 11px; background: #bfbec0; margin: 0 350px 0 315px; }
.pages { margin-top: 19px; line-height: 18px; font-size: 11px; font-weight: 500; letter-spacing: .1px; }

.foot { display: flex; align-items: center; padding: 39px 0 0 6px; height: 73px; font-size: 14.100px; }
.foot > * { flex: none; }
.fb { height: 34px; border: 1px solid #ffffff80; border-radius: 3px; background: #ffffff25; display: flex; align-items: center; }
.f1 { width: 111px; padding-left: 21px; font-size: 14px; }
.f1 b { width: 37px; letter-spacing: -.4px; } .f1 .f24 { width: 21px; font-size: 17.500px; margin-top: -1px; }
.f1 svg { margin-top: -6px; }
.f2 { width: 85px; margin-left: 5px; padding-left: 12px; }
.f2 span { width: 52px; margin-top: -2px; }
.foot > i { width: 1px; height: 16px; background: #ffffff80; margin-right: 12px; }
.a { margin-left: 12px; width: 112px; } .b { width: 166px; } .c { width: 62px; }

.rail { position: absolute; left: 1212px; top: 0; width: 65px; height: 657px; background: rgba(0,0,0,.2); }
.q { position: absolute; left: 30px; top: 23px; font-size: 12px; line-height: 18px; font-weight: 700; color: #57528a; }
.m { position: absolute; left: 26px; top: 226px; line-height: 20px; color: #e2bcb2; }
```
